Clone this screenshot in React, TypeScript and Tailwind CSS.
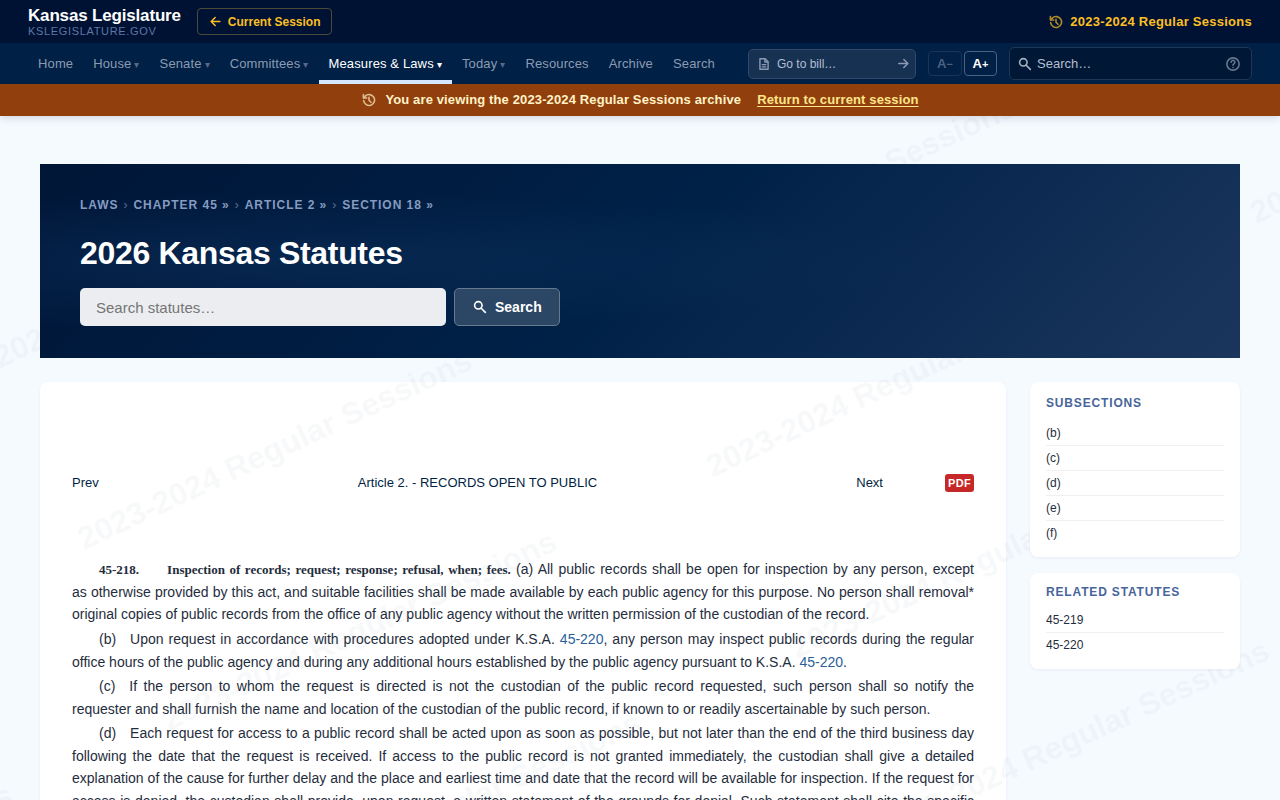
import type { ReactNode } from "react";

const NAV = [
  { label: "Home" },
  { label: "House", menu: true },
  { label: "Senate", menu: true },
  { label: "Committees", menu: true },
  { label: "Measures & Laws", menu: true, active: true },
  { label: "Today", menu: true },
  { label: "Resources" },
  { label: "Archive" },
  { label: "Search" },
];

const CRUMBS = ["Laws", "Chapter 45 »", "Article 2 »", "Section 18 »"];

function Icon({ className, children }: { className: string; children: ReactNode }) {
  return (
    <svg viewBox="0 0 24 24" className={className} fill="none" stroke="currentColor" strokeWidth="2.4" strokeLinecap="round" strokeLinejoin="round" aria-hidden="true">
      {children}
    </svg>
  );
}

function HistoryIcon({ className }: { className: string }) {
  return (
    <Icon className={className}>
      <path d="M4 13a8.2 8.2 0 1 0 2.4-6.8L4 8.6" />
      <path d="M3.6 4v5h5" />
      <path d="M12 8v4.4l3 3" />
    </Icon>
  );
}

function SearchIcon({ className }: { className: string }) {
  return (
    <Icon className={className}>
      <circle cx="9.5" cy="9.5" r="5.6" />
      <path d="M13.8 13.8 20 20" />
    </Icon>
  );
}

function ArrowLeftIcon({ className }: { className: string }) {
  return (
    <Icon className={className}>
      <path d="M19 12H5M11.5 5.5 5 12l6.500 6.500" />
    </Icon>
  );
}

function ArrowRightIcon({ className }: { className: string }) {
  return (
    <Icon className={className}>
      <path d="M4.500 12H19M12.500 5.500 19 12l-6.500 6.500" />
    </Icon>
  );
}

function DocumentIcon({ className }: { className: string }) {
  return (
    <Icon className={className}>
      <path d="M14 3H5v18h14V8z" />
      <path d="M13.500 3.500v5h5M9 13h6M9 17h6" />
    </Icon>
  );
}

function HelpIcon({ className }: { className: string }) {
  return (
    <Icon className={className}>
      <circle cx="12" cy="12" r="9.200" />
      <path d="M9.300 9.300a2.700 2.700 0 1 1 4.300 2.200c-1 .8-1.600 1.200-1.600 2.300M12 17.200v.1" />
    </Icon>
  );
}

function Header() {
  return (
    <header className="relative z-20 shadow-[0_2px_8px_rgba(0,20,50,0.15)]">
      <div className="flex h-[43px] items-center justify-between bg-[#001233] px-7">
        <div className="flex items-center gap-4">
          <a href="#" className="flex flex-col pt-px">
            <span className="text-[17px] font-bold leading-[18px] tracking-[-0.01em] text-white">Kansas Legislature</span>
            <span className="text-[11px] leading-[13px] tracking-[0.06em] text-[#5f76a6]">KSLEGISLATURE.GOV</span>
          </a>
          <a href="#" className="flex h-[27px] items-center gap-[5px] rounded border border-[#4d4a38] px-2.5 text-xs font-bold text-[#fbbf24]">
            <ArrowLeftIcon className="size-[15px]" />
            Current Session
          </a>
        </div>
        <div className="flex items-center gap-1.5 text-[13px] font-bold tracking-[0.02em] text-[#fbbf24]">
          <HistoryIcon className="size-4 opacity-70" />
          2023-2024 Regular Sessions
        </div>
      </div>
      <div className="flex h-[41px] items-center justify-between bg-[#002045] px-7">
        <nav className="flex h-full" aria-label="Main">
          {NAV.map((item) => (
            <a
              key={item.label}
              href="#"
              className={
                item.active
                  ? "flex items-center gap-[3px] border-b-4 border-[#d6e8ff] px-2.5 pt-1 text-[13px] tracking-[0.01em] text-white"
                  : "flex items-center gap-[3px] border-b-4 border-transparent px-2.5 pt-1 text-[13px] tracking-[0.01em] text-[#8c9bb3]"
              }
            >
              {item.label}
              {item.menu && <span className={item.active ? "pt-0.5 text-[10px]" : "pt-0.5 text-[10px] text-[#56698a]"}>▾</span>}
            </a>
          ))}
        </nav>
        <div className="flex items-center gap-3">
          <form className="flex h-[30px] w-[168px] items-center rounded-[5px] border border-[#32486a] bg-[#173153] pl-2 pr-1">
            <DocumentIcon className="size-3.5 shrink-0 text-[#8c9bb3]" />
            <input aria-label="Go to bill" placeholder="Go to bill…" className="ml-1.5 w-0 flex-1 bg-transparent text-xs text-white outline-none placeholder:text-[#b3bfd0]" />
            <button type="button" aria-label="Go" className="text-[#8c9bb3]">
              <ArrowRightIcon className="size-[15px]" />
            </button>
          </form>
          <div className="flex gap-0.5">
            <button type="button" aria-label="Decrease text size" className="h-[25px] w-[34px] rounded border border-[#1a3459] text-[13px] font-bold leading-none text-[#4c6080]">
              A<span className="text-[11px]">−</span>
            </button>
            <button type="button" aria-label="Increase text size" className="h-[25px] w-[33px] rounded border border-[#4c6080] text-[13px] font-bold leading-none text-white">
              A<span className="text-[11px]">+</span>
            </button>
          </div>
          <form className="flex h-[33px] w-[243px] items-center rounded-[5px] border border-[#1f3757] bg-[#001835] pl-[7px] pr-2.5">
            <SearchIcon className="size-4 shrink-0 text-[#a6b1c1]" />
            <input aria-label="Search site" placeholder="Search…" className="ml-1 w-0 flex-1 bg-transparent text-[13px] text-white outline-none placeholder:text-[#b3bfd0]" />
            <button type="button" aria-label="Search help" className="text-[#65778f]">
              <HelpIcon className="size-4" />
            </button>
          </form>
        </div>
      </div>
      <div className="flex h-8 items-center justify-center bg-[#923f0e] text-[13px] font-bold tracking-[0.01em] text-[#fef3c7]">
        <HistoryIcon className="mr-2 size-4 opacity-70" />
        <span className="mr-4">You are viewing the 2023-2024 Regular Sessions archive</span>
        <a href="#" className="text-[#fde68a] underline underline-offset-2">Return to current session</a>
      </div>
    </header>
  );
}

function Watermark() {
  return (
    <svg className="pointer-events-none absolute inset-0 size-full" aria-hidden="true">
      <defs>
        <pattern id="session-mark" width="600" height="200" patternUnits="userSpaceOnUse" patternTransform="translate(-156 384)">
          <text x="0" y="150" fontFamily="Liberation Sans, Arial, sans-serif" fontSize="32" fontWeight="700" fill="#1e3a5f" fillOpacity="0.035">
            2023-2024 Regular Sessions
          </text>
        </pattern>
      </defs>
      <g transform="rotate(-25)">
        <rect x="-1400" y="260" width="4200" height="3000" fill="url(#session-mark)" />
      </g>
    </svg>
  );
}

function Hero() {
  return (
    <section className="relative z-10 bg-[radial-gradient(ellipse_at_20%_50%,rgba(20,60,110,0.35),transparent_50%),linear-gradient(135deg,#001637_0%,#002147_50%,#1b365d_100%)] px-10 pb-8 pt-[30px]">
      <nav aria-label="Breadcrumb" className="flex gap-[5px] text-xs font-bold uppercase leading-[22px] tracking-[0.08em] text-[#869bc0]">
        {CRUMBS.map((c, i) => (
          <span key={c} className="flex gap-[5px]">
            {i > 0 && <span className="font-normal text-[#5d7296]">›</span>}
            <a href="#">{c}</a>
          </span>
        ))}
      </nav>
      <h1 className="mt-[18px] text-[32px] font-bold leading-[38px] tracking-[-0.01em] text-white">2026 Kansas Statutes</h1>
      <form className="mt-4 flex gap-2">
        <input aria-label="Search statutes" placeholder="Search statutes…" className="h-[38px] w-[366px] rounded-[5px] bg-[#ebedf0] px-4 text-[15px] text-gray-900 outline-none placeholder:text-[#757575]" />
        <button type="button" className="flex h-[38px] items-center gap-[7px] rounded-[5px] border border-[#66798f] bg-[#2c4766] px-[17px] text-sm font-bold text-white">
          <SearchIcon className="size-4" />
          Search
        </button>
      </form>
    </section>
  );
}

function SideCard({ title, items, compact = false }: { title: string; items: string[]; compact?: boolean }) {
  return (
    <section className={compact ? "rounded-lg bg-white px-4 pb-3 pt-2.5 shadow-[0_1px_3px_rgba(0,33,71,0.06)]" : "rounded-lg bg-white px-4 py-3 shadow-[0_1px_3px_rgba(0,33,71,0.06)]"}>
      <h2 className={compact ? "mb-[7px] text-xs font-bold uppercase leading-[18px] tracking-[0.07em] text-[#48659a]" : "mb-[9px] text-xs font-bold uppercase leading-[18px] tracking-[0.07em] text-[#48659a]"}>{title}</h2>
      <ul>
        {items.map((t) => (
          <li key={t} className="border-b border-[#eef1f4] last:border-0">
            <a href="#" className="block text-xs leading-6 text-[#1f2d3d]">{t}</a>
          </li>
        ))}
      </ul>
    </section>
  );
}

function Cite({ to }: { to: string }) {
  return <a href="#" className="text-[#2a6099]">{to}</a>;
}

function Article() {
  return (
    <article className="min-w-0 flex-1 rounded-lg bg-white px-8 pb-8 pt-[88px] text-sm leading-[1.61] text-[#1f2d3d] shadow-[0_1px_3px_rgba(0,33,71,0.06)]">
      <div className="flex justify-between text-[13px] leading-[26px] text-[#001f45]">
        <a href="#">Prev</a>
        <a href="#">Article 2. - RECORDS OPEN TO PUBLIC</a>
        <div className="flex items-baseline gap-[62px]">
          <a href="#">Next</a>
          <a href="#" className="rounded-[3px] bg-[#c62828] px-[3px] text-[11px] font-bold leading-[18px] tracking-[0.03em] text-white">PDF</a>
        </div>
      </div>
      <div className="mt-[62px] space-y-0.5 text-justify indent-[27px]">
        <p>
          <b className="font-['Liberation_Serif',serif] text-[13px]">45-218.</b>&emsp;&emsp;<b className="font-['Liberation_Serif',serif] text-[13px]">Inspection of records; request; response; refusal, when; fees.</b> (a) All public records shall be open for inspection by any person, except as&nbsp;otherwise provided by this act, and suitable facilities shall be made available by each public agency for this purpose. No person shall removal* original copies of public records from the office of any public agency without the written permission of the custodian of the record.
        </p>
        <p>
          (b)&emsp;Upon request in accordance with procedures adopted under K.S.A. <Cite to="45-220" />, any person may inspect public records during the regular office hours of the public agency and during any additional hours established by the public agency pursuant to K.S.A. <Cite to="45-220" />.
        </p>
        <p>
          (c)&emsp;If the person to whom the request is directed is not the custodian of the public record requested, such person shall so notify the requester and shall furnish the name and location of the custodian of the public record, if known to or readily ascertainable by such person.
        </p>
        <p>
          (d)&emsp;Each request for access to a public record shall be acted upon as soon as possible, but not later than the end of the third business day following the date that the request is received. If access to the public record is not granted immediately, the custodian shall give a detailed explanation of the cause for further delay and the place and earliest time and date that the record will be available for inspection. If the request for access is denied, the custodian shall provide, upon request, a written statement of the grounds for denial. Such statement shall cite the specific provision of law under which access is denied.
        </p>
      </div>
    </article>
  );
}

export default function App() {
  return (
    <div className="relative min-h-screen bg-[#f5faff] font-['Liberation_Sans',Arial,sans-serif]">
      <Header />
      <main className="mx-auto max-w-[1200px] pt-12">
        <Hero />
        <div className="mt-6 flex items-start gap-6">
          <Article />
          <aside className="relative z-10 flex w-[210px] flex-col gap-4">
            <SideCard title="Subsections" items={["(b)", "(c)", "(d)", "(e)", "(f)"]} />
            <SideCard title="Related Statutes" items={["45-219", "45-220"]} compact />
          </aside>
        </div>
      </main>
      <Watermark />
    </div>
  );
}
